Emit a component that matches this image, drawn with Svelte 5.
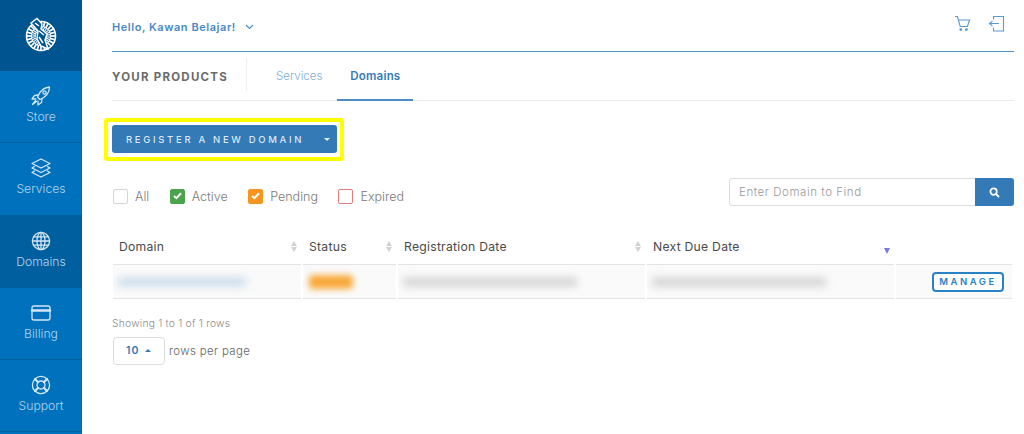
<script>
	const nav = [
		{ label: 'Store', icon: 'rocket' },
		{ label: 'Services', icon: 'layers' },
		{ label: 'Domains', icon: 'globe', active: true },
		{ label: 'Billing', icon: 'card' },
		{ label: 'Support', icon: 'support' }
	];
	const filters = [
		{ label: 'All', kind: 'all' },
		{ label: 'Active', kind: 'active', checked: true },
		{ label: 'Pending', kind: 'pending', checked: true },
		{ label: 'Expired', kind: 'expired' }
	];
	const rays = Array.from({ length: 24 }, (_, i) => i * 15);
</script>

<div class="page">
	<aside class="sidebar">
		<div class="logo">
			<svg width="34" height="36" viewBox="0 0 34 36" fill="none" stroke="#fff">
				<circle cx="17" cy="19" r="14.5" stroke-width="1.6" />
				{#each rays as r}
					<line x1="17" y1="10" x2="17" y2="4.5" stroke-width="1.7" transform="rotate({r} 17 19)" />
					<line x1="17" y1="14" x2="17" y2="9" stroke-width="1.1" transform="rotate({r + 7} 17 19)" />
				{/each}
				<path d="M7 6 L13 1.5 L18 7 L17 12 L23 17 L21 23 L24 32 L17 29 L13 22 L14 14 Z" fill="#00548f" stroke-width="1.4" />
				<path d="M11 6 L15 9 M15 14 L20 18 M15 20 L19 26" stroke-width="1.5" />
			</svg>
		</div>
		{#each nav as item}
			<a class="nav-item" class:active={item.active} href="#top">
				<svg width="24" height="24" viewBox="0 0 24 24" fill="none" stroke="#d3e6f5" stroke-width="1.3" stroke-linejoin="round" stroke-linecap="round">
					{#if item.icon === 'rocket'}
						<path d="M8.5 13 C10.5 7.5 15 3.5 20.5 3 C20.5 8.5 16.5 13 11 15.5 Z" />
						<circle cx="15.5" cy="8.5" r="1.6" />
						<path d="M9 11 L5.5 11.5 L3 15 L7 15 M13 15 L12.5 18.5 L9 21 L9 17" />
						<path d="M6.5 16.5 L3.5 20.5 L7.5 17.5" />
					{:else if item.icon === 'layers'}
						<path d="M12 3 L21 7.5 L12 12 L3 7.5 Z" />
						<path d="M5.5 10.5 L3 12 L12 16.5 L21 12 L18.5 10.5" />
						<path d="M5.5 15 L3 16.5 L12 21 L21 16.5 L18.5 15" />
					{:else if item.icon === 'globe'}
						<circle cx="12" cy="12" r="8.6" />
						<ellipse cx="12" cy="12" rx="4" ry="8.6" />
						<path d="M12 3.4 V20.6 M3.4 12 H20.6 M4.6 7.8 H19.4 M4.6 16.2 H19.4" />
					{:else if item.icon === 'card'}
						<rect x="3" y="5" width="18" height="14" rx="2" />
						<path d="M3 9.5 H21" stroke-width="2.4" />
					{:else}
						<circle cx="12" cy="12" r="8.6" />
						<circle cx="12" cy="12" r="4" />
						<path d="M6 6 L9.2 9.2 M18 6 L14.8 9.2 M6 18 L9.2 14.8 M18 18 L14.8 14.8" stroke-width="2.2" />
					{/if}
				</svg>
				<span>{item.label}</span>
			</a>
		{/each}
	</aside>

	<main class="content">
		<header class="topbar">
			<div class="hello">Hello, Kawan Belajar!
				<svg width="9" height="6" viewBox="0 0 9 6" fill="none" stroke="#4a8ac4" stroke-width="1.1"><path d="M1 1 L4.5 4.5 L8 1" /></svg>
			</div>
			<div class="top-icons">
				<svg width="17" height="17" viewBox="0 0 17 17" fill="none" stroke="#5a9ad2" stroke-width="1.1">
					<path d="M1 1.5 H3.4 L6.2 11.5 H13.4 L15.6 5 H4.4" />
					<circle cx="6.8" cy="14.6" r="0.9" fill="#5a9ad2" />
					<circle cx="12.4" cy="14.6" r="0.9" fill="#5a9ad2" />
				</svg>
				<svg width="17" height="17" viewBox="0 0 17 17" fill="none" stroke="#5a9ad2" stroke-width="1.1">
					<path d="M5.5 4.5 V1.5 H15.5 V16 H5.5 V12.5" />
					<path d="M11 8.5 H1.5 M4.5 5.8 L1.5 8.5 L4.5 11.2" />
				</svg>
			</div>
		</header>

		<nav class="tabs">
			<h2>YOUR PRODUCTS</h2>
			<span class="tab">Services</span>
			<span class="tab current">Domains</span>
		</nav>

		<div class="highlight">
			<button class="register">
				<span>REGISTER A NEW DOMAIN</span>
				<i class="caret down"></i>
			</button>
		</div>

		<div class="toolbar">
			<div class="filters">
				{#each filters as f}
					<div class="filter">
						<span class="check {f.kind}">
							{#if f.checked}
								<svg width="9" height="8" viewBox="0 0 9 8" fill="none" stroke="#fff" stroke-width="2"><path d="M1 4 L3.4 6.2 L8 1.2" /></svg>
							{/if}
						</span>
						{f.label}
					</div>
				{/each}
			</div>
			<div class="search">
				<div class="search-input">Enter Domain to Find</div>
				<div class="search-btn">
					<svg width="11" height="11" viewBox="0 0 11 11" fill="none" stroke="#fff" stroke-width="1.8"><circle cx="4.6" cy="4.6" r="3.2" /><path d="M7 7 L10 10" /></svg>
				</div>
			</div>
		</div>

		<div class="table">
			<div class="th">Domain <i class="sort"></i></div>
			<div class="th">Status <i class="sort"></i></div>
			<div class="th">Registration Date <i class="sort"></i></div>
			<div class="th">Next Due Date <i class="sort-down"></i></div>
			<div class="th"></div>
			<div class="td"><div class="blur blue"></div></div>
			<div class="td"><div class="blur orange"></div></div>
			<div class="td"><div class="blur grey"></div></div>
			<div class="td"><div class="blur grey"></div></div>
			<div class="td action"><button class="manage">MANAGE</button></div>
		</div>

		<p class="showing">Showing 1 to 1 of 1 rows</p>
		<div class="pager">
			<div class="per-page">10 <i class="caret up"></i></div>
			rows per page
		</div>
	</main>
</div>

<style>
	:global(body) {
		background: #fff;
	}

	.page {
		display: flex;
		width: 1024px;
		height: 434px;
		overflow: hidden;
		font-family: Inter, "Open Sans", sans-serif;
	}

	.sidebar {
		width: 82px;
		flex: none;
		background: #0071bc;
		display: flex;
		flex-direction: column;
	}

	.logo {
		height: 71px;
		flex: none;
		background: #00548f;
		display: flex;
		align-items: center;
		justify-content: center;
		padding-bottom: 2px;
		box-sizing: border-box;
	}

	.nav-item {
		height: 72.3px;
		flex: none;
		box-sizing: border-box;
		display: flex;
		flex-direction: column;
		align-items: center;
		padding-top: 13px;
		gap: 1px;
		color: #b4d4ec;
		font-size: 12.2px;
		font-weight: 300;
		text-decoration: none;
		border-bottom: 1px solid #00609f;
	}

	.nav-item.active {
		background: #00609f;
	}

	.content {
		flex: 1;
		padding: 0 10px 0 30px;
		min-width: 0;
	}

	.topbar {
		height: 51px;
		border-bottom: 1px solid #4f93c9;
		display: flex;
		justify-content: space-between;
		padding: 0 9px 0 0;
		box-sizing: content-box;
	}

	.hello {
		font-size: 11px;
		font-weight: 600;
		letter-spacing: 0.55px;
		color: #4a8ac4;
		padding-top: 20px;
		display: flex;
		align-items: flex-start;
		gap: 9px;
		line-height: 14px;
	}

	.hello svg {
		margin-top: 4px;
	}

	.top-icons {
		display: flex;
		gap: 17px;
		padding-top: 15px;
	}

	.tabs {
		height: 48px;
		border-bottom: 1px solid #ebebeb;
		display: flex;
		align-items: stretch;
	}

	.tabs h2 {
		margin: 6px 0 9px;
		width: 134px;
		border-right: 1px solid #eee;
		font-size: 11.5px;
		font-weight: 700;
		letter-spacing: 1.25px;
		color: #6b6b6b;
		line-height: 38px;
	}

	.tab {
		font-size: 11.5px;
		font-weight: 300;
		color: #7fadd6;
		padding: 0 0 0 29px;
		line-height: 48px;
		margin-bottom: -1px;
		box-sizing: border-box;
	}

	.tab.current {
		margin-left: 15px;
		padding: 0 13px;
		font-weight: 600;
		letter-spacing: 0.2px;
		color: #337ab7;
		border-bottom: 2px solid #4f8cc4;
	}

	.highlight {
		display: inline-block;
		margin: 17px 0 0 -8px;
		width: 240px;
		box-sizing: border-box;
		border: 4px solid #ffff00;
		border-radius: 3px;
		padding: 3px 4px;
		background: #fff;
		height: 43px;
		vertical-align: top;
	}

	.register {
		display: flex;
		align-items: center;
		justify-content: space-between;
		width: 225px;
		height: 28px;
		padding: 0 7px 0 14px;
		border: none;
		border-radius: 3px;
		background: #337ab7;
		color: #dbe8f4;
		font: 500 9.5px Inter, sans-serif;
		letter-spacing: 2.68px;
	}

	.caret {
		display: inline-block;
		border-left: 3px solid transparent;
		border-right: 3px solid transparent;
	}

	.caret.down {
		border-top: 3px solid #e6eff7;
	}

	.caret.up {
		border-bottom: 3px solid #337ab7;
		margin-left: 2px;
		vertical-align: 2px;
	}

	.toolbar {
		display: flex;
		justify-content: space-between;
		margin-top: 17px;
		height: 28px;
	}

	.filters {
		display: flex;
		gap: 20.5px;
		align-items: center;
		padding-top: 8px;
		height: 20px;
		margin-left: 1px;
	}

	.filter {
		display: flex;
		align-items: center;
		gap: 7px;
		font-size: 12.5px;
		font-weight: 300;
		color: #7a7a7a;
	}

	.check {
		width: 13px;
		height: 13px;
		border: 1px solid #d5d5d5;
		border-radius: 2px;
		display: flex;
		align-items: center;
		justify-content: center;
	}

	.check.active {
		background: #4ba34e;
		border-color: #4ba34e;
	}

	.check.pending {
		background: #f7931e;
		border-color: #f7931e;
	}

	.check.expired {
		border-color: #e27c7c;
	}

	.search {
		display: flex;
		width: 285px;
		height: 28px;
	}

	.search-input {
		flex: 1;
		border: 1px solid #ddd;
		border-right: none;
		border-radius: 4px 0 0 4px;
		font-size: 11.5px;
		font-weight: 300;
		letter-spacing: 0.55px;
		color: #999;
		line-height: 26px;
		padding-left: 9px;
	}

	.search-btn {
		width: 39px;
		background: #337ab7;
		border-radius: 0 3px 3px 0;
		display: flex;
		align-items: center;
		justify-content: center;
	}

	.table {
		display: grid;
		grid-template-columns: 188px 93px 247px 247px 116px;
		column-gap: 2px;
		margin: 22px 0 0 1px;
		width: 899px;
	}

	.th {
		height: 37px;
		box-sizing: border-box;
		border-bottom: 1px solid #e4e4e4;
		font-size: 12.2px;
		font-weight: 400;
		letter-spacing: 0.25px;
		color: #4a4a4a;
		padding: 11px 0 0 6px;
		position: relative;
		line-height: 16px;
	}

	.sort,
	.sort-down {
		position: absolute;
		right: 4px;
		top: 13px;
		width: 0;
		height: 0;
		border-left: 3.5px solid transparent;
		border-right: 3.5px solid transparent;
	}

	.sort {
		border-bottom: 5px solid #d2d2d2;
	}

	.sort::after {
		content: '';
		position: absolute;
		left: -3.5px;
		top: 6px;
		border-left: 3.5px solid transparent;
		border-right: 3.5px solid transparent;
		border-top: 5px solid #d2d2d2;
	}

	.sort-down {
		top: 20px;
		border-top: 6px solid #7b7bdc;
	}

	.td {
		height: 34px;
		box-sizing: border-box;
		background: #fafafa;
		border-bottom: 1px solid #e4e4e4;
		display: flex;
		align-items: center;
		overflow: hidden;
	}

	.blur {
		height: 8px;
		filter: blur(4px);
	}

	.blur.blue {
		width: 128px;
		margin-left: 5px;
		background: #c5d8ea;
	}

	.blur.orange {
		width: 44px;
		height: 14px;
		margin-left: 6px;
		background: #f8a93a;
		border-radius: 4px;
		filter: blur(3px);
	}

	.blur.grey {
		width: 174px;
		margin-left: 5px;
		background: #cfcfcf;
	}

	.action {
		justify-content: flex-end;
		padding-right: 8px;
	}

	.manage {
		width: 72px;
		height: 20px;
		padding: 0;
		background: #fff;
		border: 2px solid #2a82c6;
		border-radius: 4px;
		color: #2a82c6;
		font: 600 9.5px Inter, sans-serif;
		letter-spacing: 2.5px;
	}

	.showing {
		margin: 17px 0 0;
		font-size: 10.3px;
		font-weight: 300;
		letter-spacing: 0.22px;
		line-height: 14px;
		color: #8d8d8d;
	}

	.pager {
		margin: 7px 0 0 1px;
		display: flex;
		align-items: center;
		gap: 4px;
		font-size: 11.5px;
		font-weight: 300;
		letter-spacing: 0.32px;
		color: #666;
	}

	.per-page {
		width: 52px;
		height: 28px;
		box-sizing: border-box;
		border: 1px solid #ddd;
		border-radius: 4px;
		font-size: 10.5px;
		font-weight: 600;
		letter-spacing: 1px;
		color: #337ab7;
		line-height: 26px;
		padding-left: 12px;
	}
</style>
